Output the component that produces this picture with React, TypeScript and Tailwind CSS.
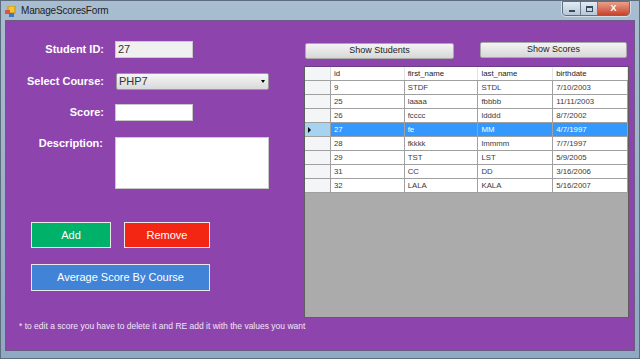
import React from 'react';

const rows = [
  ['9', 'STDF', 'STDL', '7/10/2003'],
  ['25', 'laaaa', 'fbbbb', '11/11/2003'],
  ['26', 'fcccc', 'ldddd', '8/7/2002'],
  ['27', 'fe', 'MM', '4/7/1997'],
  ['28', 'fkkkk', 'lmmmm', '7/7/1997'],
  ['29', 'TST', 'LST', '5/9/2005'],
  ['31', 'CC', 'DD', '3/16/2006'],
  ['32', 'LALA', 'KALA', '5/16/2007'],
];

const cols = ['id', 'first_name', 'last_name', 'birthdate'];
const widths = ['w-[74px]', 'w-[74px]', 'w-[75px]', 'w-[75px]'];

const Label: React.FC<{ text: string }> = ({ text }) => (
  <div className="w-[99px] text-right text-[11px] font-bold text-white pr-[1px]">{text}</div>
);

export default function App() {
  return (
    <div
      className="w-[640px] h-[359px] flex flex-col bg-gradient-to-b from-[#a9bdd1] to-[#8fa9c3] border border-[#5d6d7e] overflow-hidden"
      style={{ fontFamily: '"Liberation Sans", Arial, sans-serif' }}
    >
      {/* title bar */}
      <div className="h-[19px] flex items-center pl-[4px] pr-[9px] relative">
        <svg width="11" height="11" viewBox="0 0 11 11" className="mr-[5px] mt-[1px]">
          <rect x="3" y="0" width="7" height="7" fill="#f6c435" stroke="#b88a12" strokeWidth="0.8" />
          <rect x="0" y="4" width="5" height="4" fill="#e0533a" />
          <rect x="4" y="7" width="5" height="4" fill="#3b78c9" />
        </svg>
        <span className="text-[10px] text-[#1e1e1e] tracking-[-0.2px]">ManageScoresForm</span>
        <div className="ml-auto flex self-start border border-[#5f6f80] rounded-b-[4px] overflow-hidden shadow-[0_0_0_1px_rgba(255,255,255,0.5)]">
          <div className="w-[18px] h-[13px] bg-gradient-to-b from-[#e3ebf3] to-[#b7c7d7] border-r border-[#6d7d8e] flex items-center justify-center">
            <div className="w-[6px] h-[2px] bg-[#36495e] mt-[4px]" />
          </div>
          <div className="w-[17px] h-[13px] bg-gradient-to-b from-[#e3ebf3] to-[#b7c7d7] border-r border-[#6d7d8e] flex items-center justify-center">
            <div className="w-[7px] h-[6px] border border-[#36495e] border-t-2" />
          </div>
          <div className="w-[31px] h-[13px] bg-gradient-to-b from-[#e8a08c] to-[#c7402a] flex items-center justify-center text-white text-[9px] font-bold leading-none">
            X
          </div>
        </div>
      </div>

      {/* client area */}
      <div className="mx-[4px] h-[331px] bg-[#8e44ad] border border-[#6d5b84] flex">
        {/* left column */}
        <div className="w-[298px] flex flex-col pt-[20px]">
          <div className="flex items-center h-[17px]">
            <Label text="Student ID:" />
            <div className="ml-[10px] w-[78px] h-[17px] bg-[#f0f0f0] border border-[#c8c8c8] text-[11px] text-[#333] pl-[2px] leading-[15px]">
              27
            </div>
          </div>
          <div className="flex items-center h-[17px] mt-[15px]">
            <Label text="Select Course:" />
            <div className="ml-[11px] w-[153px] h-[17px] bg-gradient-to-b from-[#f6f6f6] to-[#d9d9d9] border border-[#9a9a9a] rounded-[2px] flex items-center pl-[2px] pr-[3px]">
              <span className="text-[11px] text-[#333]">PHP7</span>
              <span className="ml-auto w-0 h-0 border-l-[2.5px] border-r-[2.5px] border-t-[3px] border-l-transparent border-r-transparent border-t-black" />
            </div>
          </div>
          <div className="flex items-center h-[17px] mt-[14px]">
            <Label text="Score:" />
            <div className="ml-[10px] w-[78px] h-[17px] bg-white border border-[#c8c8c8]" />
          </div>
          <div className="flex items-start mt-[16px]">
            <div className="w-[97px] text-right text-[11px] font-bold text-white leading-[12px]">Description:</div>
            <div className="ml-[12px] w-[154px] h-[52px] bg-white border border-[#c8c8c8]" />
          </div>

          <div className="flex mt-[33px] ml-[25px] gap-[13px]">
            <div className="w-[80px] h-[26px] bg-[#00b16a] border border-[#e8e8e8] flex items-center justify-center text-white text-[11px]">
              Add
            </div>
            <div className="w-[86px] h-[26px] bg-[#f22613] border border-[#e8e8e8] flex items-center justify-center text-white text-[11px]">
              Remove
            </div>
          </div>
          <div className="mt-[16px] ml-[25px] w-[179px] h-[27px] bg-[#4183d7] border border-[#e8e8e8] flex items-center justify-center text-white text-[11px]">
            Average Score By Course
          </div>
          <div className="mt-[29px] ml-[13px] whitespace-nowrap text-[8.5px] text-[#f0e6f6]">
            * to edit a score you have to delete it and RE add it with the values you want
          </div>
        </div>

        {/* right column */}
        <div className="w-[325px] flex flex-col pt-[21px]">
          <div className="flex items-start h-[17px]">
            <div className="ml-[1px] mt-[1px] w-[149px] h-[16px] bg-gradient-to-b from-[#f4f4f4] to-[#d7d7d7] border border-[#a9a9a9] rounded-[2px] flex items-center justify-center text-[9px] text-[#222]">
              Show Students
            </div>
            <div className="ml-auto mr-[2px] w-[147px] h-[16px] bg-gradient-to-b from-[#f4f4f4] to-[#d7d7d7] border border-[#a9a9a9] rounded-[2px] flex items-center justify-center text-[9px] text-[#222]">
              Show Scores
            </div>
          </div>
          <div className="mt-[7px] h-[252px] bg-[#ababab] border border-[#5e5e5e] border-t-[#6b3d86]">
            <div className="flex h-[14px] bg-white border-b border-[#a0a0a0]">
              <div className="w-[26px] bg-[#f3f5f7] border-r border-[#d4d9de]" />
              {cols.map((c, i) => (
                <div key={c} className={`${widths[i]} border-r border-[#e3e3e3] text-[7.8px] text-[#222] pl-[3px] leading-[13px]`}>
                  {c}
                </div>
              ))}
            </div>
            {rows.map((r) => {
              const sel = r[0] === '27';
              return (
                <div key={r[0]} className="flex h-[14px] border-b border-[#a0a0a0]">
                  <div className={`w-[26px] border-r border-[#a0a0a0] flex items-center pl-[3px] ${sel ? 'bg-[#a7d3f2]' : 'bg-[#f3f5f7]'}`}>
                    {sel && (
                      <span className="w-0 h-0 border-t-[3px] border-b-[3px] border-l-[3px] border-t-transparent border-b-transparent border-l-black" />
                    )}
                  </div>
                  {r.map((v, i) => (
                    <div
                      key={i}
                      className={`${widths[i]} border-r border-[#a0a0a0] text-[7.8px] pl-[3px] leading-[13px] ${
                        sel ? 'bg-[#3399ff] text-white' : 'bg-white text-[#3a3a3a]'
                      }`}
                    >
                      {v}
                    </div>
                  ))}
                </div>
              );
            })}
          </div>
        </div>
      </div>
    </div>
  );
}
